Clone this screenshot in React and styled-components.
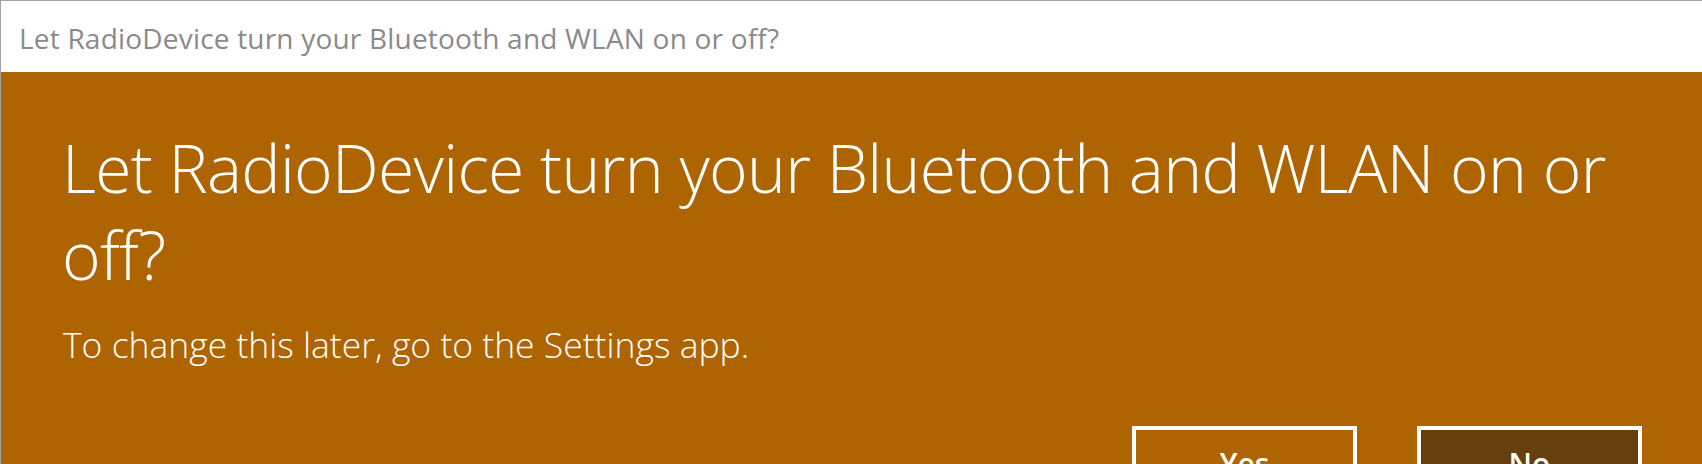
import React from 'react';
import styled, { createGlobalStyle } from 'styled-components';

const GlobalStyle = createGlobalStyle`
  html, body {
    margin: 0;
    padding: 0;
    overflow: hidden;
    background: #ffffff;
  }
`;

const Window = styled.div`
  width: 1702px;
  height: 464px;
  box-sizing: border-box;
  border-top: 1px solid #a3a3a3;
  border-left: 1px solid #a3a3a3;
  display: flex;
  flex-direction: column;
  overflow: hidden;
  font-family: "Open Sans", "Noto Sans", sans-serif;
`;

const TitleBar = styled.div`
  height: 71px;
  flex-shrink: 0;
  display: flex;
  align-items: center;
  padding: 2px 0 0 18px;
  box-sizing: border-box;
  background: #ffffff;
  color: #8a8a8a;
  font-size: 28px;
  letter-spacing: 0.2px;
`;

const Body = styled.div`
  flex: 1;
  background: #ae6400;
  padding: 52px 60px 0 61px;
  color: #ffffff;
`;

const Heading = styled.h1`
  margin: 0;
  font-size: 66px;
  font-weight: 300;
  line-height: 87px;
  letter-spacing: -0.7px;
`;

const Note = styled.p`
  margin: 24px 0 0 1px;
  font-size: 35.5px;
  font-weight: 300;
  line-height: 44px;
`;

const Actions = styled.div`
  display: flex;
  justify-content: flex-end;
  gap: 60px;
  margin-top: 60px;
`;

const Button = styled.div`
  width: 225px;
  height: 72px;
  box-sizing: border-box;
  border: 4px solid #ffffff;
  background: ${p => (p.$primary ? '#653f0e' : 'transparent')};
  color: #ffffff;
  display: flex;
  justify-content: center;
  padding-top: 13px;
  font-size: 30px;
  font-weight: 600;
`;

export default function App() {
  return (
    <>
      <GlobalStyle />
      <Window>
        <TitleBar>Let RadioDevice turn your Bluetooth and WLAN on or off?</TitleBar>
        <Body>
          <Heading>Let RadioDevice turn your Bluetooth and WLAN on or off?</Heading>
          <Note>To change this later, go to the Settings app.</Note>
          <Actions>
            <Button>Yes</Button>
            <Button $primary>No</Button>
          </Actions>
        </Body>
      </Window>
    </>
  );
}
